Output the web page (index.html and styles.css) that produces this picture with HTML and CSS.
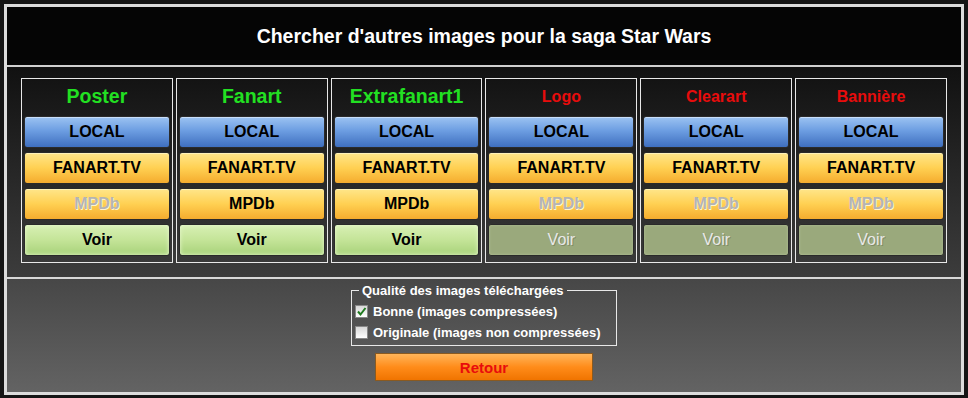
FILE: index.html
```html
<!DOCTYPE html>
<html lang="fr">

<head>
    <meta charset="UTF-8">
    <meta name="viewport" content="width=device-width, initial-scale=1.0">
    <title>Images Star Wars</title>
    <link rel="stylesheet" href="styles.css">
</head>

<body>
    <div class="dialog">
        <div class="entete">
            <h1 class="titre">Chercher d'autres images pour la saga Star Wars</h1>
        </div>

        <div class="sources">
            <div class="colonne">
                <h2 class="nom vert">Poster</h2>
                <button class="btn bleu">LOCAL</button>
                <button class="btn orange">FANART.TV</button>
                <button class="btn orange inactif">MPDb</button>
                <button class="btn voir">Voir</button>
            </div>
            <div class="colonne">
                <h2 class="nom vert">Fanart</h2>
                <button class="btn bleu">LOCAL</button>
                <button class="btn orange">FANART.TV</button>
                <button class="btn orange">MPDb</button>
                <button class="btn voir">Voir</button>
            </div>
            <div class="colonne">
                <h2 class="nom vert">Extrafanart1</h2>
                <button class="btn bleu">LOCAL</button>
                <button class="btn orange">FANART.TV</button>
                <button class="btn orange">MPDb</button>
                <button class="btn voir">Voir</button>
            </div>
            <div class="colonne">
                <h2 class="nom rouge">Logo</h2>
                <button class="btn bleu">LOCAL</button>
                <button class="btn orange">FANART.TV</button>
                <button class="btn orange inactif">MPDb</button>
                <button class="btn voir eteint">Voir</button>
            </div>
            <div class="colonne">
                <h2 class="nom rouge">Clearart</h2>
                <button class="btn bleu">LOCAL</button>
                <button class="btn orange">FANART.TV</button>
                <button class="btn orange inactif">MPDb</button>
                <button class="btn voir eteint">Voir</button>
            </div>
            <div class="colonne">
                <h2 class="nom rouge">Bannière</h2>
                <button class="btn bleu">LOCAL</button>
                <button class="btn orange">FANART.TV</button>
                <button class="btn orange inactif">MPDb</button>
                <button class="btn voir eteint">Voir</button>
            </div>
        </div>

        <div class="bas">
            <fieldset class="qualite">
                <legend>Qualité des images téléchargées</legend>
                <label class="choix">
                    <span class="case">
                        <svg width="11" height="11" viewBox="0 0 11 11"><path d="M2 5.5 L4.5 8.5 L9.5 2" fill="none" stroke="#1f7a1f" stroke-width="2"/></svg>
                    </span>
                    Bonne (images compressées)
                </label>
                <label class="choix">
                    <span class="case"></span>
                    Originale (images non compressées)
                </label>
            </fieldset>
            <button class="retour">Retour</button>
        </div>
    </div>
</body>

</html>
```

FILE: styles.css
```css
body {
    margin: 0;
    padding: 4px;
    background-color: #151515;
    font-family: 'Liberation Sans', Arial, sans-serif;
}

.dialog {
    width: 954px;
    border: 3px solid #dcdcdc;
    background-color: #0a0a0a;
}

.entete {
    height: 58px;
    background-color: #050505;
    border-bottom: 2px solid #d0d0d0;
    display: flex;
    align-items: center;
    justify-content: center;
}

.titre {
    margin: 0;
    color: white;
    font-size: 19.5px;
    font-weight: bold;
}

.sources {
    display: flex;
    gap: 3px;
    padding: 11px 14px 14px;
    background: linear-gradient(#111111, #3c3c3c);
    border-bottom: 2px solid #d8d8d8;
}

.colonne {
    border: 1px solid #e8e8e8;
    padding: 0 2px 6px;
    display: flex;
    flex-direction: column;
    gap: 4px;
    width: 146px;
}

.nom {
    margin: 0;
    height: 31px;
    display: flex;
    align-items: center;
    justify-content: center;
    font-size: 16px;
    font-weight: bold;
    padding-top: 2px;
}

.vert {
    color: #22e022;
    font-size: 19.5px;
}

.rouge {
    color: #e80c0c;
}

.btn {
    height: 32px;
    border: 1px solid #2a2a2a;
    border-radius: 3px;
    font-family: 'Liberation Sans', Arial, sans-serif;
    font-size: 16px;
    font-weight: bold;
    color: black;
    padding: 0;
    cursor: pointer;
}

.bleu {
    background: linear-gradient(#9cc3f2, #6d9ee2 45%, #3f6fbf);
    box-shadow: inset 0 1px 0 #c8defa;
}

.orange {
    background: linear-gradient(#ffe68a, #ffd052 50%, #f5ac2e);
    box-shadow: inset 0 1px 0 #fff2b8;
}

.inactif {
    color: #b4b4b4;
    text-shadow: 1px 1px 0 #fff4d0;
}

.voir {
    background: linear-gradient(#d8f0b4, #c4e498 50%, #a8d27a);
    box-shadow: inset 0 0 4px #e8f8d0;
}

.eteint {
    background: #9aa97c;
    box-shadow: inset 0 0 3px #b4c096;
    color: #e8e8e8;
    text-shadow: 1px 1px 0 #7f8c66;
    font-weight: normal;
}

.bas {
    height: 113px;
    background: linear-gradient(#474747, #636363);
    display: flex;
    flex-direction: column;
    align-items: center;
    padding-top: 4px;
    box-sizing: border-box;
}

.qualite {
    margin: 0;
    width: 266px;
    box-sizing: border-box;
    border: 1px solid #e8e8e8;
    padding: 3px 8px 2px 3px;
    color: white;
    font-size: 13px;
    font-weight: bold;
}

.qualite legend {
    padding: 0 3px;
    margin-left: 4px;
}

.choix {
    display: flex;
    align-items: center;
    gap: 5px;
    height: 21px;
}

.case {
    width: 11px;
    height: 11px;
    background: linear-gradient(#d8d8d8, #ffffff);
    border: 1px solid #888;
    display: flex;
}

.retour {
    margin-top: 7px;
    width: 218px;
    height: 28px;
    border: 1px solid #8a5a20;
    background: linear-gradient(#ffb55a, #ff8c1a 50%, #f07400);
    color: #e80c0c;
    font-family: 'Liberation Sans', Arial, sans-serif;
    font-size: 15px;
    font-weight: bold;
    cursor: pointer;
}
```
